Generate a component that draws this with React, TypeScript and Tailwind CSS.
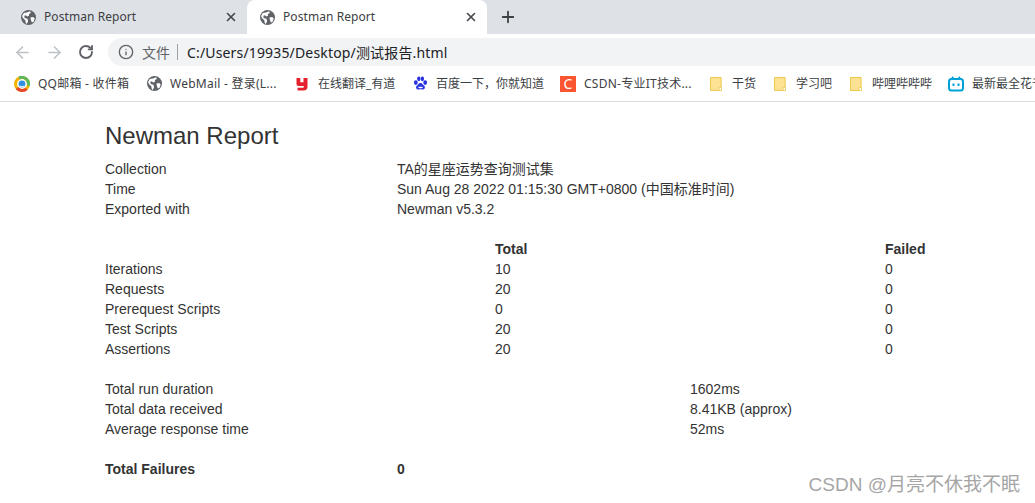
import { ArrowLeft, ArrowRight, Info, Plus, RotateCw, X } from 'lucide-react'
import type { ReactNode } from 'react'

const uiFont = "[font-family:'Noto_Sans','Noto_Sans_CJK_SC',sans-serif]"
const cjk = "[font-family:'Liberation_Sans','Noto_Sans_CJK_SC',sans-serif]"

function Globe({ className = 'h-[15px] w-[15px]' }: { className?: string }) {
  return (
    <svg viewBox="0 0 16 16" className={`${className} shrink-0`}>
      <circle cx="8" cy="8" r="8" fill="#5f6368" />
      <path d="M3 3.2 6.2 2.6 9.6 1.4 10.6 3 8.3 4.4 8.6 6 6.6 6.8 5.2 5.6 3.6 6.2 3.8 8.4 6.8 9.2 7.6 11.6 6.2 14.8 5 13.6 4.6 11 2 8.4 1.2 6.4Z" fill="#fff" />
      <path d="M10 8 13 7.4 14.6 9 13.4 12.4 11.6 13.4 10.6 10.6Z" fill="#fff" />
    </svg>
  )
}

function Tab({ active }: { active?: boolean }) {
  return (
    <div className={`flex h-[34px] w-[240px] items-center rounded-t-lg pr-[9px] ${active ? 'bg-white pl-[13px]' : 'pl-[14px]'}`}>
      <Globe />
      <span className={`ml-[8px] flex-1 text-[12px] tracking-[0.07px] text-[#3c4043] ${uiFont}`}>Postman Report</span>
      <X className="h-[14px] w-[14px] text-[#45494d]" strokeWidth={2.8} />
    </div>
  )
}

function Folder() {
  return (
    <svg viewBox="0 0 12 14" className="h-[14px] w-[12px] shrink-0">
      <path d="M.5.5h10.6v13H.5Z" fill="#fde293" stroke="#ecc94b" />
      <path d="M9 10.5h2.5v3H9Z" fill="#fff" stroke="#ecc94b" strokeWidth=".8" />
    </svg>
  )
}

function Bookmark({ icon, label, width, wide }: { icon: ReactNode; label: string; width: string; wide?: boolean }) {
  return (
    <div className={`flex shrink-0 items-center ${width}`}>
      <span className="flex w-[16px] shrink-0 justify-center">{icon}</span>
      <span className={`ml-[8px] whitespace-nowrap text-[12px] text-[#3c4043] ${wide ? 'tracking-[0.25px]' : ''} ${uiFont}`}>{label}</span>
    </div>
  )
}

function Row({ cells, cols, bold }: { cells: string[]; cols: string; bold?: boolean }) {
  return (
    <div className={`grid h-[20px] items-center ${cols} ${bold ? 'font-bold' : ''}`}>
      {cells.map((c, i) => (
        <div key={i} className="whitespace-nowrap">{c}</div>
      ))}
    </div>
  )
}

export default function App() {
  const cols3 = 'grid-cols-[390px_390px_390px]'
  const cols2 = 'grid-cols-[585px_585px]'
  const colsInfo = 'grid-cols-[292px_878px]'
  return (
    <div className="relative h-[503px] w-[1035px] overflow-hidden bg-white">
      {/* Browser chrome */}
      <div className="flex h-[34px] items-center bg-[#dee1e6] pl-[7px]">
        <Tab />
        <Tab active />
        <Plus className="ml-[12px] h-[18px] w-[18px] text-[#3c4043]" strokeWidth={2.4} />
      </div>
      <div className="flex h-[32px] items-center pt-[4px] pl-[13px]">
        <ArrowLeft className="h-[19px] w-[19px] text-[#bdc1c6]" strokeWidth={2} />
        <ArrowRight className="ml-[13px] h-[19px] w-[19px] text-[#bdc1c6]" strokeWidth={2} />
        <RotateCw className="ml-[14px] h-[16px] w-[16px] text-[#5f6368]" strokeWidth={2.8} />
        <div className="ml-[14px] flex h-[28px] flex-1 items-center rounded-l-full bg-[#f1f3f4] pl-[10px]">
          <Info className="h-[16px] w-[16px] text-[#5f6368]" strokeWidth={2} />
          <span className={`ml-[8px] text-[14px] text-[#5f6368] ${uiFont}`}>文件</span>
          <span className="ml-[7px] h-[16px] w-px bg-[#9aa0a6]" />
          <span className={`ml-[9px] text-[14px] tracking-[0.16px] text-[#202124] ${uiFont}`}>C:/Users/19935/Desktop/测试报告.html</span>
        </div>
      </div>
      <div className="flex h-[36px] items-center overflow-hidden border-b border-[#dadce0] pl-[14px]">
        <Bookmark
          wide
          width="w-[132px]"
          label="QQ邮箱 - 收件箱"
          icon={
            <svg viewBox="0 0 16 16" className="h-[16px] w-[16px]">
              <circle cx="8" cy="8" r="6.5" fill="none" stroke="#f4b400" strokeWidth="3" />
              <path d="M5 2.2a6.500 6.500 0 0 1 9.300 7.500" fill="none" stroke="#5cb85c" strokeWidth="3" />
              <path d="M3 12a6.500 6.500 0 0 0 9.500.8" fill="none" stroke="#e8452c" strokeWidth="3" />
              <circle cx="8" cy="8" r="3.400" fill="#2f8fe0" />
              <path d="M5.500 10q2.500 1.600 5 0" fill="none" stroke="#fff" />
            </svg>
          }
        />
        <Bookmark wide width="w-[148px]" label="WebMail - 登录(L..." icon={<Globe />} />
        <Bookmark
          width="w-[118px]"
          label="在线翻译_有道"
          icon={
            <svg viewBox="0 0 12 14" className="h-[14px] w-[12px]">
              <path d="M.5 1h3.800v4.200h3.200V1h4v8.500Q11.500 13.500 7.500 13.500H1.500v-2.800h5.500q1 0 1-1.700H2.500Q.5 9 .5 7Z" fill="#e5212d" />
            </svg>
          }
        />
        <Bookmark
          width="w-[148px]"
          label="百度一下，你就知道"
          icon={
            <svg viewBox="0 0 16 16" className="h-[15px] w-[15px]" fill="#2932e1">
              <ellipse cx="3" cy="7" rx="2" ry="2.500" />
              <ellipse cx="6.200" cy="3" rx="1.800" ry="2.500" />
              <ellipse cx="10" cy="3" rx="1.800" ry="2.500" />
              <ellipse cx="13" cy="7" rx="2" ry="2.500" />
              <path d="M8 7.500c2 0 2.500 2 4 3 1.500 1.500.5 4-1.500 4-1 0-1.500-.5-2.500-.5s-1.500.5-2.500.5c-2 0-3-2.500-1.500-4 1.500-1 2-3 4-3Z" />
              <path d="M5.800 11.500h4.400v1.500H5.800Z" fill="#fff" />
            </svg>
          }
        />
        <Bookmark
          wide
          width="w-[148px]"
          label="CSDN-专业IT技术..."
          icon={
            <span className={`flex h-[16px] w-[16px] items-center justify-center bg-[#fc5531] text-[14px] leading-none text-white ${uiFont}`}>C</span>
          }
        />
        <Bookmark width="w-[64px]" label="干货" icon={<Folder />} />
        <Bookmark width="w-[76px]" label="学习吧" icon={<Folder />} />
        <Bookmark width="w-[100px]" label="哔哩哔哔哔" icon={<Folder />} />
        <Bookmark
          width="w-[100px]"
          label="最新最全花千骨"
          icon={
            <svg viewBox="0 0 16 16" className="h-[16px] w-[16px]">
              <path d="M4 .8 6 3M12 .8 10 3" stroke="#00a1d6" strokeWidth="1.500" />
              <rect x="1" y="3" width="14" height="11.500" rx="2.500" fill="none" stroke="#00a1d6" strokeWidth="2" />
              <rect x="4.500" y="7.500" width="2" height="2.500" fill="#00a1d6" />
              <rect x="9.500" y="7.500" width="2" height="2.500" fill="#00a1d6" />
            </svg>
          }
        />
      </div>

      {/* Report */}
      <div className={`w-[1275px] pl-[105px] text-[14px] leading-[20px] text-[#333] ${cjk}`}>
        <h1 className="mt-[21px] mb-[10px] text-[24px] leading-[26px] font-normal">Newman Report</h1>
        <Row cols={colsInfo} cells={['Collection', 'TA的星座运势查询测试集']} />
        <Row cols={colsInfo} cells={['Time', 'Sun Aug 28 2022 01:15:30 GMT+0800 (中国标准时间)']} />
        <Row cols={colsInfo} cells={['Exported with', 'Newman v5.3.2']} />

        <div className="mt-[20px]">
          <Row bold cols={cols3} cells={['', 'Total', 'Failed']} />
          <Row cols={cols3} cells={['Iterations', '10', '0']} />
          <Row cols={cols3} cells={['Requests', '20', '0']} />
          <Row cols={cols3} cells={['Prerequest Scripts', '0', '0']} />
          <Row cols={cols3} cells={['Test Scripts', '20', '0']} />
          <Row cols={cols3} cells={['Assertions', '20', '0']} />
        </div>

        <div className="mt-[20px]">
          <Row cols={cols2} cells={['Total run duration', '1602ms']} />
          <Row cols={cols2} cells={['Total data received', '8.41KB (approx)']} />
          <Row cols={cols2} cells={['Average response time', '52ms']} />
        </div>

        <div className="mt-[20px]">
          <Row bold cols={colsInfo} cells={['Total Failures', '0']} />
        </div>
      </div>

      {/* Watermark */}
      <div className={`absolute right-[15px] bottom-[6px] text-[19px] leading-[24px] text-[#a6a6a6] ${cjk}`}>CSDN @月亮不休我不眠</div>
    </div>
  )
}
